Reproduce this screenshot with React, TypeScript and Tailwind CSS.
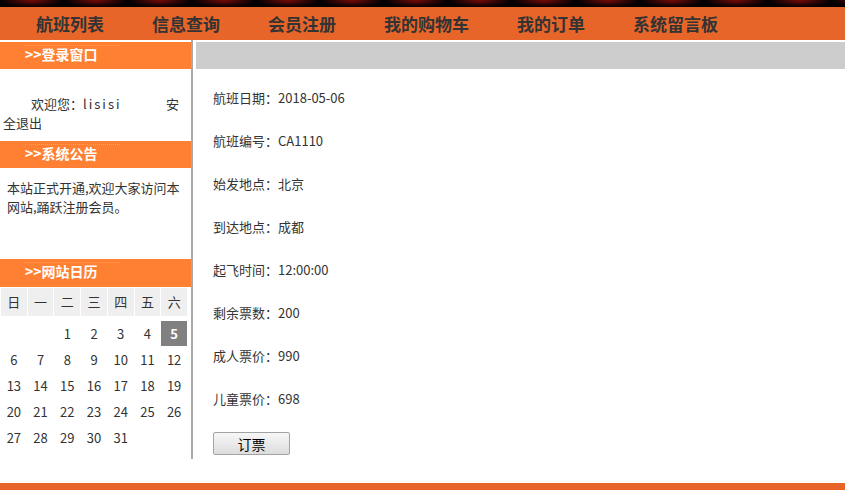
import React from 'react';

const navItems = ['航班列表', '信息查询', '会员注册', '我的购物车', '我的订单', '系统留言板'];

const flightInfo = [
  ['航班日期', '2018-05-06'],
  ['航班编号', 'CA1110'],
  ['始发地点', '北京'],
  ['到达地点', '成都'],
  ['起飞时间', '12:00:00'],
  ['剩余票数', '200'],
  ['成人票价', '990'],
  ['儿童票价', '698'],
];

const weekDays = ['日', '一', '二', '三', '四', '五', '六'];

// May 2018 starts on Tuesday
const days: (number | null)[] = [null, null, ...Array.from({ length: 31 }, (_, i) => i + 1)];
const today = 5;

function SideTitle({ title, tall }: { title: string; tall?: boolean }) {
  return (
    <div className={`${tall ? 'h-[28px]' : 'h-[27px]'} bg-[#ff8033] flex flex-col`}>
      <div className="mt-[3px] ml-[25px] w-[95px] border-t border-dotted border-[#f2a57a]" />
      <div className="pl-[25px] mt-[1px] text-[14px] leading-[14px] font-bold text-white">&gt;&gt;{title}</div>
    </div>
  );
}

export default function App() {
  return (
    <div className="w-[845px] min-h-[490px] bg-white font-['Noto_Sans_CJK_SC',sans-serif] text-[13px] text-[#333] overflow-hidden">
      {/* top banner strip */}
      <div className="h-[7px] bg-[#050000] bg-[radial-gradient(ellipse_at_50%_0%,#7a0c07_0,#3b0604_35%,#050000_70%)] bg-[length:64px_7px]" />

      {/* nav */}
      <nav className="h-[33px] bg-[#e8652a] flex items-center pl-[36px] gap-[48px]">
        {navItems.map(item => (
          <span key={item} className="text-[17px] leading-[20px] font-bold text-[#333]">
            {item}
          </span>
        ))}
      </nav>

      <div className="flex">
        {/* sidebar */}
        <aside className="w-[193px] shrink-0 border-r-2 border-[#aaaaaa] pt-[2px] pb-[9px]">
          <SideTitle title="登录窗口" />
          <div className="h-[72px] pt-[25px] leading-[19px]">
            <div className="flex">
              <span className="ml-[31px]">
                欢迎您：<span className="tracking-[2px]">lisisi</span>
              </span>
              <span className="ml-auto mr-[12px]">安</span>
            </div>
            <div className="pl-[3px]">全退出</div>
          </div>

          <SideTitle title="系统公告" />
          <div className="h-[91px] pt-[10px] pl-[7px] leading-[19px]">
            <div>本站正式开通,欢迎大家访问本</div>
            <div>网站,踊跃注册会员。</div>
          </div>

          <SideTitle title="网站日历" tall />
          <div className="ml-[1px] mt-[1px] w-[186px] grid grid-cols-7 gap-x-[1px]">
            {weekDays.map(d => (
              <div key={d} className="h-[28px] bg-[#efefef] flex items-center justify-center">
                {d}
              </div>
            ))}
          </div>
          <div className="ml-[1px] mt-[5px] w-[186px] grid grid-cols-7 gap-x-[1px] gap-y-[1px]">
            {days.map((d, i) => (
              <div
                key={i}
                className={`h-[25px] flex items-center justify-center ${
                  d === today ? 'bg-[#808080] text-white font-bold' : ''
                }`}
              >
                {d ?? ''}
              </div>
            ))}
          </div>
        </aside>

        {/* main */}
        <main className="flex-1 ml-[3px] pt-[2px]">
          <div className="h-[27px] bg-[#cccccc]" />
          <div className="pl-[17px] pt-[7px]">
            {flightInfo.map(([label, value]) => (
              <div key={label} className="h-[43px] flex items-center">
                {label}：{value}
              </div>
            ))}
            <button
              type="button"
              className="mt-[12px] w-[77px] h-[23px] border border-[#a3a3a3] rounded-[2px] bg-gradient-to-b from-[#f7f7f7] to-[#dddddd] text-[14px] leading-[20px] text-black"
            >
              订票
            </button>
          </div>
        </main>
      </div>

      <div className="mt-[24px] h-[10px] bg-[#e8652a]" />
    </div>
  );
}
